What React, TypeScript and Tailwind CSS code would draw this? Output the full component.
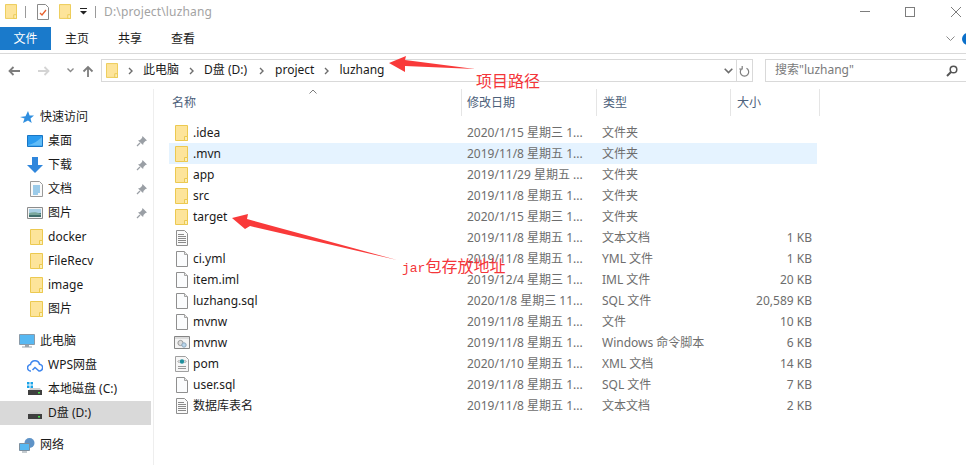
import type { ReactNode } from "react";

function FolderIcon({ className = "w-[13px] h-4" }: { className?: string }) {
  return (
    <svg viewBox="0 0 13 16" className={`shrink-0 ${className}`}>
      <path d="M.5.5h12v15H.5z" fill="#fde49a" stroke="#ecc950" />
      <path d="M9.5 15.5v-4h3v4z" fill="#fbeeb8" stroke="#ecc950" />
    </svg>
  );
}

function BlankFile() {
  return (
    <svg viewBox="0 0 12 16" className="w-3 h-4 shrink-0">
      <path d="M.5.5h8l3 3v12H.5z" fill="#fbfcfd" stroke="#8f8f8f" />
      <path d="M8.5.5v3h3" fill="#e8e8e8" stroke="#a5a5a5" />
    </svg>
  );
}

function TextFile() {
  return (
    <svg viewBox="0 0 12 16" className="w-3 h-4 shrink-0">
      <path d="M.5.5h8l3 3v12H.5z" fill="#fafafa" stroke="#8f8f8f" />
      <path d="M2 4.5h6M2 6.5h8M2 8.5h8M2 10.5h8M2 12.5h8" stroke="#8a8a8a" />
    </svg>
  );
}

function ScriptFile() {
  return (
    <svg viewBox="0 0 16 13" className="w-4 h-[13px] shrink-0">
      <path d="M.5.5h15v12H.5z" fill="#f4f4f4" stroke="#858585" />
      <path d="M1 1h14v2H1z" fill="#dcdcdc" />
      <circle cx="6.5" cy="7" r="2.6" fill="#dcdcdc" stroke="#9a9a9a" />
      <circle cx="10" cy="9" r="2.2" fill="#b9d6ec" stroke="#8fa8bd" />
    </svg>
  );
}

function XmlFile() {
  return (
    <svg viewBox="0 0 14 16" className="w-3.5 h-4 shrink-0">
      <path d="M.5.5h10l3 3v12H.5z" fill="#f6f6f6" stroke="#a0a0a0" />
      <circle cx="7" cy="5.5" r="2.2" fill="#1f8f9c" />
      <path d="M3 5.5l1.5-1.5M3 5.5L4.5 7M11 5.5L9.5 4M11 5.5L9.5 7" stroke="#777" strokeWidth=".8" />
      <path d="M3 10.5h8M3 12.5h8" stroke="#9a9a9a" />
    </svg>
  );
}

function Chevron() {
  return (
    <svg viewBox="0 0 5 8" className="w-[5px] h-2 shrink-0">
      <path d="M1 1l3 3-3 3" fill="none" stroke="#6d6d6d" strokeWidth="1.4" />
    </svg>
  );
}

function Pin() {
  return (
    <svg viewBox="0 0 12 12" className="w-3 h-3 absolute right-[3px] top-1.5">
      <path d="M6.5 1l4.5 4.5-1.5.6-2 2-.4 2L2 5.4l2-.4 2-2z" fill="#9a9fa5" />
      <path d="M4 8l-3 3" stroke="#9a9fa5" strokeWidth="1.2" />
    </svg>
  );
}

function Desktop() {
  return (
    <svg viewBox="0 0 16 12" className="w-4 h-3">
      <path d="M.5.5h15v11H.5z" fill="#2b9cf0" stroke="#1976c4" />
      <path d="M1 10C6 9 11 6 15 2v8.5H1z" fill="#63bdf7" />
    </svg>
  );
}

function Download() {
  return (
    <svg viewBox="0 0 16 16" className="w-4 h-4">
      <path d="M5 0h6v8h5l-8 8-8-8h5z" fill="#2f86dc" />
    </svg>
  );
}

function Docs() {
  return (
    <svg viewBox="0 0 13 16" className="w-[13px] h-4 ml-0.5">
      <path d="M.5.5h9l3 3v12H.5z" fill="#fafafa" stroke="#9a9a9a" />
      <path d="M3 5h7M3 7h7M3 9h7M3 11h7M3 13h5" stroke="#3d9bd8" />
    </svg>
  );
}

function Pictures() {
  return (
    <svg viewBox="0 0 16 12" className="w-4 h-3">
      <path d="M.5.5h15v11H.5z" fill="#f4f4f4" stroke="#8c8c8c" />
      <path d="M2 2h12v4H2z" fill="#a9cfe4" />
      <path d="M2 6h12v4H2z" fill="#3f6e6c" />
      <path d="M2 6c4-1 8-1 12 1v1H2z" fill="#7aa79c" />
    </svg>
  );
}

function Drive({ windows = false }: { windows?: boolean }) {
  return (
    <svg viewBox="0 0 16 14" className="w-4 h-3.5">
      {windows && (
        <path d="M0 0h2.5v2.5H0zM3.5 0H6v2.5H3.5zM0 3.5h2.5V6H0zM3.5 3.5H6V6H3.5z" fill="#1aa3e8" />
      )}
      <path d="M2 8l1-2h10l1 2z" fill="#cfcfcf" />
      <path d="M1 8h14v5H1z" fill="#3f3f3f" />
      <path d="M11 10h2v1.4h-2z" fill="#49e04d" />
    </svg>
  );
}

const quick: { label: string; icon: ReactNode; pin?: boolean }[] = [
  { label: "桌面", icon: <Desktop />, pin: true },
  { label: "下载", icon: <Download />, pin: true },
  { label: "文档", icon: <Docs />, pin: true },
  { label: "图片", icon: <Pictures />, pin: true },
  { label: "docker", icon: <FolderIcon className="w-[13px] h-4 ml-0.5" /> },
  { label: "FileRecv", icon: <FolderIcon className="w-[13px] h-4 ml-0.5" /> },
  { label: "image", icon: <FolderIcon className="w-[13px] h-4 ml-0.5" /> },
  { label: "图片", icon: <FolderIcon className="w-[13px] h-4 ml-0.5" /> },
];

type FileKind = "folder" | "blank" | "text" | "script" | "xml";

const files: { name: string; date: string; type: string; size?: string; kind: FileKind; hover?: boolean }[] = [
  { name: ".idea", date: "2020/1/15 星期三 1...", type: "文件夹", kind: "folder" },
  { name: ".mvn", date: "2019/11/8 星期五 1...", type: "文件夹", kind: "folder", hover: true },
  { name: "app", date: "2019/11/29 星期五 ...", type: "文件夹", kind: "folder" },
  { name: "src", date: "2019/11/8 星期五 1...", type: "文件夹", kind: "folder" },
  { name: "target", date: "2020/1/15 星期三 1...", type: "文件夹", kind: "folder" },
  { name: "", date: "2019/11/8 星期五 1...", type: "文本文档", size: "1 KB", kind: "text" },
  { name: "ci.yml", date: "2019/11/8 星期五 1...", type: "YML 文件", size: "1 KB", kind: "blank" },
  { name: "item.iml", date: "2019/12/4 星期三 1...", type: "IML 文件", size: "20 KB", kind: "blank" },
  { name: "luzhang.sql", date: "2020/1/8 星期三 11...", type: "SQL 文件", size: "20,589 KB", kind: "blank" },
  { name: "mvnw", date: "2019/11/8 星期五 1...", type: "文件", size: "10 KB", kind: "blank" },
  { name: "mvnw", date: "2019/11/8 星期五 1...", type: "Windows 命令脚本", size: "6 KB", kind: "script" },
  { name: "pom", date: "2020/1/10 星期五 1...", type: "XML 文档", size: "14 KB", kind: "xml" },
  { name: "user.sql", date: "2019/11/8 星期五 1...", type: "SQL 文件", size: "7 KB", kind: "blank" },
  { name: "数据库表名", date: "2019/11/8 星期五 1...", type: "文本文档", size: "2 KB", kind: "text" },
];

function FileIcon({ kind }: { kind: FileKind }) {
  if (kind === "folder") return <FolderIcon />;
  if (kind === "text") return <TextFile />;
  if (kind === "script") return <ScriptFile />;
  if (kind === "xml") return <XmlFile />;
  return <BlankFile />;
}

function SideRow({ icon, label, pin, active, head }: { icon: ReactNode; label: string; pin?: boolean; active?: boolean; head?: boolean }) {
  return (
    <div className={`relative flex h-6 w-[151px] items-center ${head ? "pl-[19px] gap-[5px]" : "pl-[27px] gap-[5px]"} ${active ? "bg-[#d9d9d9]" : ""}`}>
      <span className="flex w-4 items-center justify-center">{icon}</span>
      <span className="whitespace-nowrap">{label}</span>
      {pin && <Pin />}
    </div>
  );
}

export default function App() {
  return (
    <div className="relative flex h-[465px] w-[966px] flex-col overflow-hidden bg-white text-[12px] text-[#1a1a1a] font-['Noto_Sans','Noto_Sans_CJK_SC',sans-serif]">
      {/* title bar */}
      <div className="flex h-[27px] items-center pb-1 pl-[5px]">
        <FolderIcon className="w-3 h-[15px]" />
        <span className="ml-2 h-3 w-px bg-[#9a9a9a]" />
        <svg viewBox="0 0 12 16" className="ml-[11px] w-3 h-4">
          <path d="M.5.5h8l3 3v12H.5z" fill="#fff" stroke="#8a8a8a" />
          <path d="M3 9l2 2 4-5" fill="none" stroke="#e8602c" strokeWidth="1.3" />
        </svg>
        <FolderIcon className="ml-2.5 w-3 h-[15px]" />
        <svg viewBox="0 0 7 7" className="ml-[9px] w-[7px] h-[7px]">
          <path d="M0 0h7v1H0zM0 3h7L3.5 6.5z" fill="#222" />
        </svg>
        <span className="ml-2 h-3 w-px bg-[#9a9a9a]" />
        <span className="ml-2 text-[#a3a3a3] tracking-[0.15px]">D:\project\luzhang</span>
        <div className="ml-auto flex items-center pr-[5px]">
          <span className="h-px w-[10px] bg-[#7d7d7d]" />
          <span className="ml-[35px] h-[10px] w-[10px] border border-[#7d7d7d]" />
          <svg viewBox="0 0 10 10" className="ml-9 w-[10px] h-[10px]">
            <path d="M0 0l10 10M10 0L0 10" stroke="#7d7d7d" />
          </svg>
        </div>
      </div>

      {/* ribbon tabs */}
      <div className="flex h-[27px] items-start border-b border-[#d9d9d9]">
        <span className="flex h-[23px] w-[51px] items-center justify-center bg-[#1a7acb] text-white">文件</span>
        <span className="ml-[14px] flex h-[23px] items-center">主页</span>
        <span className="ml-[29px] flex h-[23px] items-center">共享</span>
        <span className="ml-[29px] flex h-[23px] items-center">查看</span>
        <div className="ml-auto flex h-[23px] items-center">
          <svg viewBox="0 0 9 5" className="w-[9px] h-[5px]">
            <path d="M.5.5l4 4 4-4" fill="none" stroke="#8a8a8a" />
          </svg>
          <span className="ml-[7px] -mr-2 h-3 w-3 rounded-full bg-[#0a6fc9]" />
        </div>
      </div>

      {/* address bar */}
      <div className="mt-[5px] flex h-[23px] items-center">
        <div className="flex w-[101px] items-center pl-2">
          <svg viewBox="0 0 12 10" className="w-3 h-2.5">
            <path d="M12 5H2M5.5 1L1.5 5l4 4" fill="none" stroke="#7d7d7d" strokeWidth="1.8" />
          </svg>
          <svg viewBox="0 0 12 10" className="ml-[18px] w-3 h-2.5">
            <path d="M0 5h10M6.5 1l4 4-4 4" fill="none" stroke="#d4d4d4" strokeWidth="1.8" />
          </svg>
          <svg viewBox="0 0 7 5" className="ml-[17px] w-[7px] h-[5px]">
            <path d="M.5.5l3 3 3-3" fill="none" stroke="#8a8a8a" strokeWidth="1.4" />
          </svg>
          <svg viewBox="0 0 12 12" className="ml-2 w-3 h-3">
            <path d="M6 12V2M1.5 6.5L6 2l4.5 4.5" fill="none" stroke="#7d7d7d" strokeWidth="1.8" />
          </svg>
        </div>
        <div className="flex h-full w-[652px] items-center border border-[#d9d9d9] pl-1">
          <FolderIcon className="w-3 h-[15px]" />
          <span className="ml-[10px]"><Chevron /></span>
          <span className="ml-[10px] pb-px">此电脑</span>
          <span className="ml-[10px]"><Chevron /></span>
          <span className="ml-[10px] pb-px">D盘 (D:)</span>
          <span className="ml-3"><Chevron /></span>
          <span className="ml-[11px] pb-px">project</span>
          <span className="ml-[10px]"><Chevron /></span>
          <span className="ml-[10px] pb-px">luzhang</span>
          <div className="ml-auto flex h-full items-center">
            <svg viewBox="0 0 9 6" className="mr-[3px] w-[9px] h-1.5">
              <path d="M.7.7L4.5 4.5 8.3.7" fill="none" stroke="#6d6d6d" strokeWidth="1.6" />
            </svg>
            <div className="flex h-full w-4 items-center justify-center border-l border-[#d9d9d9]">
              <svg viewBox="0 0 11 12" className="w-[11px] h-3">
                <path d="M3.5 3.2a4.2 4.2 0 1 0 4 0M3.2 1v3h-3" fill="none" stroke="#7d7d7d" strokeWidth="1.2" />
              </svg>
            </div>
          </div>
        </div>
        <div className="ml-3 flex h-full flex-1 items-center justify-between border border-[#d9d9d9] border-r-0 pl-[9px] pr-[8px] text-[#7a7a7a]">
          <span className="pb-px">搜索"luzhang"</span>
          <svg viewBox="0 0 12 12" className="w-3 h-3">
            <circle cx="7.5" cy="4.5" r="3.3" fill="none" stroke="#555" strokeWidth="1.5" />
            <path d="M5 7L1 11" stroke="#555" strokeWidth="2" />
          </svg>
        </div>
      </div>

      {/* body */}
      <div className="mt-[7px] flex flex-1">
        <aside className="w-[154px] border-r border-[#eeeeee] pt-4">
          <SideRow
            head
            label="快速访问"
            icon={
              <svg viewBox="0 0 14 13" className="w-3.5 h-[13px]">
                <path d="M8 0l1.6 4.4L14 4.6l-3.5 2.8 1.2 4.6L8 9.4 3 12l1.5-4.4L0 6l5.5-.8z" fill="#2f8fe0" />
              </svg>
            }
          />
          {quick.map((q, i) => (
            <SideRow key={i} {...q} />
          ))}
          <div className="mt-2">
            <SideRow
              head
              label="此电脑"
              icon={
                <svg viewBox="0 0 16 14" className="w-4 h-3.5">
                  <path d="M.5.5h15v10H.5z" fill="#57b8f2" stroke="#8a9aa8" />
                  <path d="M6 11h4v1.5H6zM3 12.5h10v1H3z" fill="#9aa4ac" />
                </svg>
              }
            />
            <SideRow
              label="WPS网盘"
              icon={
                <svg viewBox="0 0 16 13" className="w-4 h-[13px]">
                  <path d="M4 12a3.2 3.2 0 0 1-.5-6.4 4.6 4.6 0 0 1 9-.4A3.4 3.4 0 0 1 12 12L8 8.5 5.5 11" fill="none" stroke="#3e86ee" strokeWidth="1.5" />
                </svg>
              }
            />
            <SideRow label="本地磁盘 (C:)" icon={<Drive windows />} />
            <SideRow active label="D盘 (D:)" icon={<Drive />} />
          </div>
          <div className="mt-2">
            <SideRow
              head
              label="网络"
              icon={
                <svg viewBox="0 0 16 16" className="w-4 h-4">
                  <circle cx="10.5" cy="6" r="5" fill="#5f93c7" />
                  <path d="M.5 6.5h10v7H.5z" fill="#57b8f2" stroke="#7d8f9e" />
                  <path d="M3 14.5h5v1H3z" fill="#8b979f" />
                </svg>
              }
            />
          </div>
        </aside>

        <main className="relative flex-1">
          {/* column headers */}
          <div className="flex h-[27px] items-center text-[#4c607a]">
            <span className="w-[307px] pl-[18px]">名称</span>
            <span className="flex h-full w-[135px] items-center border-l border-[#e5e5e5] pl-[5px]">修改日期</span>
            <span className="flex h-full w-[134px] items-center border-l border-[#e5e5e5] pl-[6px]">类型</span>
            <span className="flex h-full w-[90px] items-center border-x border-[#e5e5e5] pl-[6px]">大小</span>
          </div>
          <svg viewBox="0 0 8 5" className="absolute left-[155px] top-0 w-2 h-[5px]">
            <path d="M.5 4.5L4 1l3.5 3.5" fill="none" stroke="#7d7d7d" />
          </svg>

          {/* rows */}
          <div className="mt-1.5 ml-[15px] w-[648px]">
            {files.map((f, i) => (
              <div key={i} className={`flex h-[21px] items-center ${f.hover ? "bg-[#e5f3ff]" : ""}`}>
                <span className="flex w-6 items-center justify-center pl-px">
                  <FileIcon kind={f.kind} />
                </span>
                <span className="w-[274px]">{f.name}</span>
                <span className="w-[135px] text-[#6d6d6d] whitespace-nowrap">{f.date}</span>
                <span className="w-[134px] text-[#6d6d6d] whitespace-nowrap">{f.type}</span>
                <span className="w-[76px] text-right text-[#6d6d6d] whitespace-nowrap">{f.size}</span>
              </div>
            ))}
          </div>
        </main>
      </div>

      {/* red annotations drawn over the screenshot */}
      <svg viewBox="0 0 966 465" className="pointer-events-none absolute left-0 top-0 w-[966px] h-[465px]">
        <path d="M389 63l17-7-1 4 70 9-70-3v6z" fill="#f93a3a" />
        <path d="M232 218l16-4-1 5 150 41-147-34-5 3z" fill="#f93a3a" />
      </svg>
      <span className="absolute left-[476px] top-[70px] text-[16px] leading-[22px] text-[#f4363a]">项目路径</span>
      <span className="absolute left-[402px] top-[255px] text-[16px] leading-[22px] text-[#f4363a]">
        <span className="font-['Liberation_Mono',monospace] text-[13px]">jar</span>包存放地址
      </span>
    </div>
  );
}
